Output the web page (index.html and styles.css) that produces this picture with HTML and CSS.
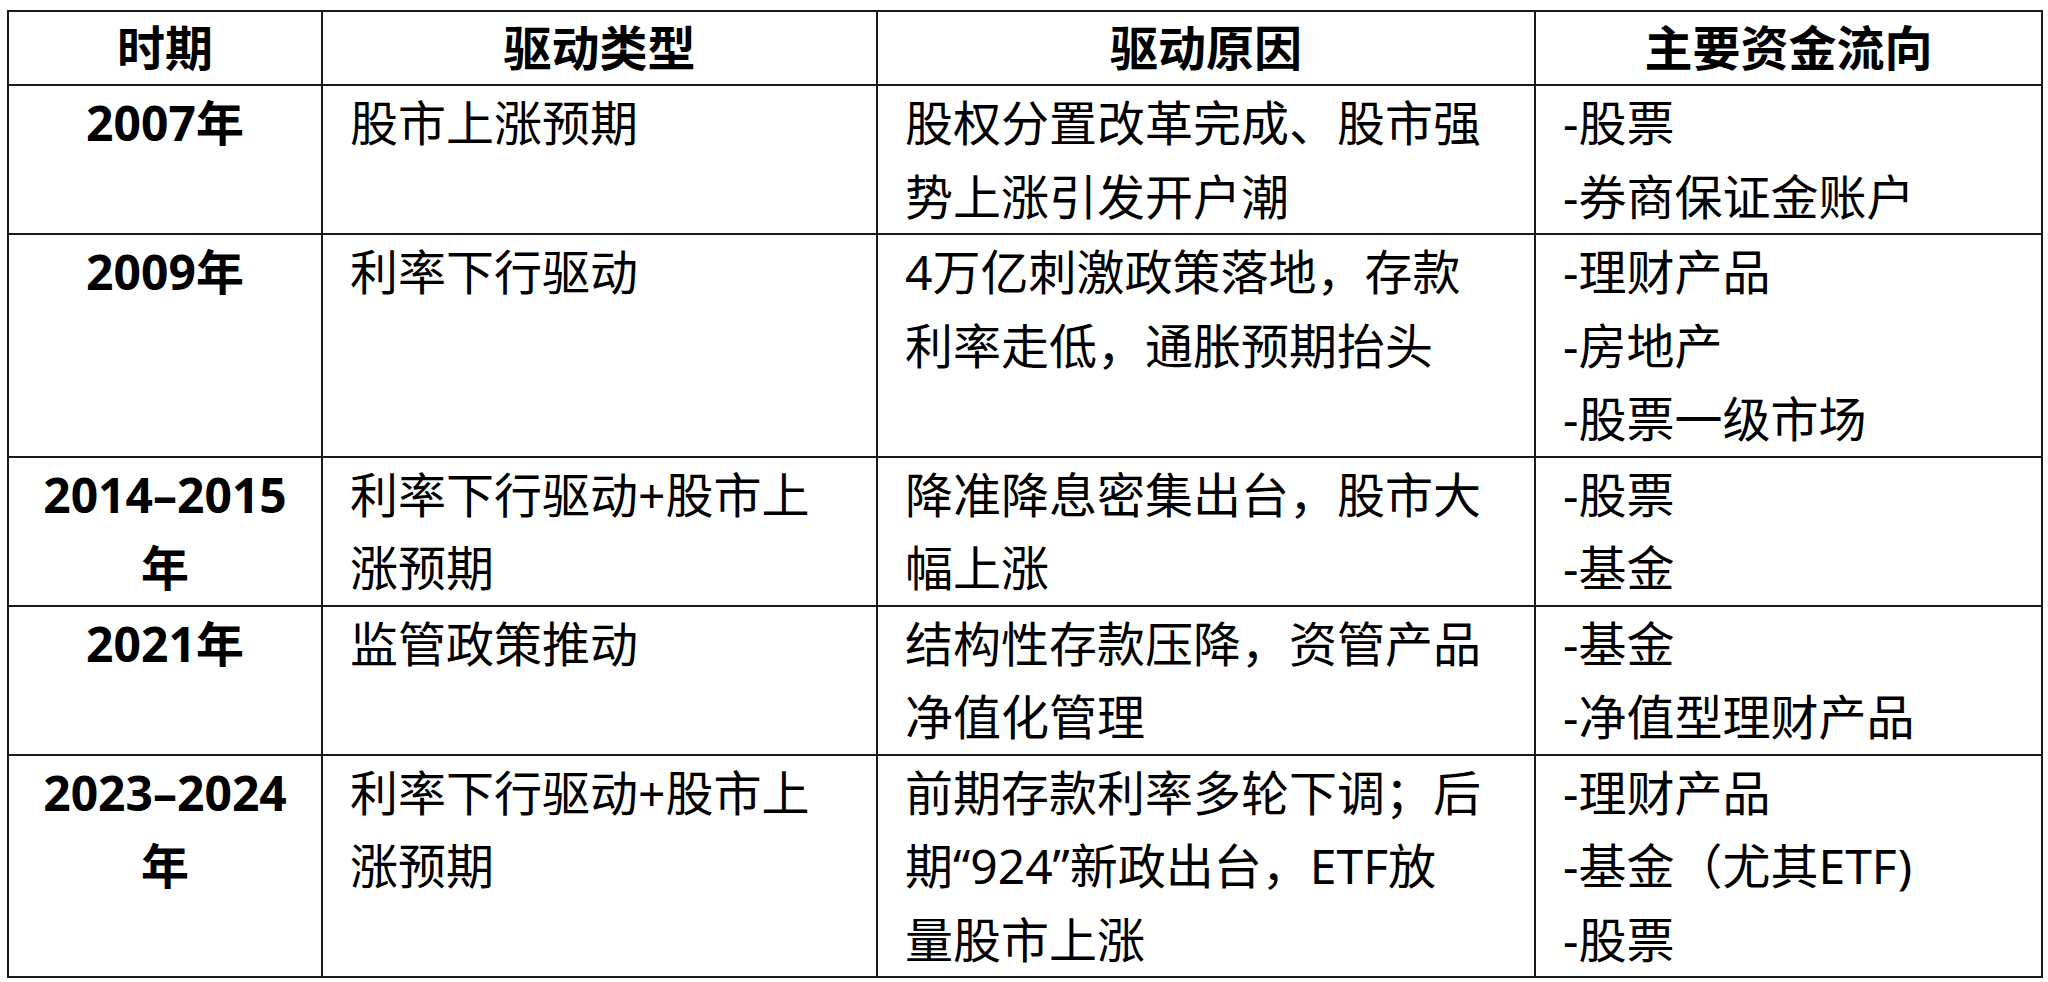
FILE: index.html
```html
<!DOCTYPE html>
<html lang="zh-CN">
<head>
<meta charset="utf-8">
<title>资金流向</title>
<link rel="stylesheet" href="styles.css">
</head>
<body>
<div class="page">
  <div class="grid">
    <div class="cell head">时期</div>
    <div class="cell head">驱动类型</div>
    <div class="cell head">驱动原因</div>
    <div class="cell head">主要资金流向</div>

    <div class="cell period">2007年</div>
    <div class="cell">股市上涨预期</div>
    <div class="cell">股权分置改革完成、股市强势上涨引发开户潮</div>
    <div class="cell"><div>-股票</div><div>-券商保证金账户</div></div>

    <div class="cell period">2009年</div>
    <div class="cell">利率下行驱动</div>
    <div class="cell">4万亿刺激政策落地，存款利率走低，通胀预期抬头</div>
    <div class="cell"><div>-理财产品</div><div>-房地产</div><div>-股票一级市场</div></div>

    <div class="cell period">2014–2015年</div>
    <div class="cell">利率下行驱动+股市上涨预期</div>
    <div class="cell">降准降息密集出台，股市大幅上涨</div>
    <div class="cell"><div>-股票</div><div>-基金</div></div>

    <div class="cell period">2021年</div>
    <div class="cell">监管政策推动</div>
    <div class="cell">结构性存款压降，资管产品净值化管理</div>
    <div class="cell"><div>-基金</div><div>-净值型理财产品</div></div>

    <div class="cell period">2023–2024年</div>
    <div class="cell">利率下行驱动+股市上涨预期</div>
    <div class="cell">前期存款利率多轮下调；后期“924”新政出台，ETF放<br>量股市上涨</div>
    <div class="cell"><div>-理财产品</div><div>-基金（尤其ETF)</div><div>-股票</div></div>
  </div>
</div>
</body>
</html>
```

FILE: styles.css
```css
html, body {
  margin: 0;
  padding: 0;
  background: #ffffff;
}

.page {
  padding: 10px 0 0 7px;
}

.grid {
  display: grid;
  grid-template-columns: 314px 555px 658px 507px;
  width: 2036px;
  box-sizing: border-box;
  border-top: 2px solid #1a1a1a;
  border-left: 2px solid #1a1a1a;
  font-family: "Noto Sans", "Noto Sans CJK SC", sans-serif;
  font-size: 48px;
  color: #000000;
}

.cell {
  box-sizing: border-box;
  border-right: 2px solid #1a1a1a;
  border-bottom: 2px solid #1a1a1a;
  padding: 0 34px 0 27px;
  line-height: 73.5px;
  font-weight: 400;
}

.head {
  line-height: 72px;
  font-weight: 700;
  text-align: center;
  padding: 0 20px;
}

.period {
  font-weight: 700;
  text-align: center;
  padding: 0 20px;
}
```
